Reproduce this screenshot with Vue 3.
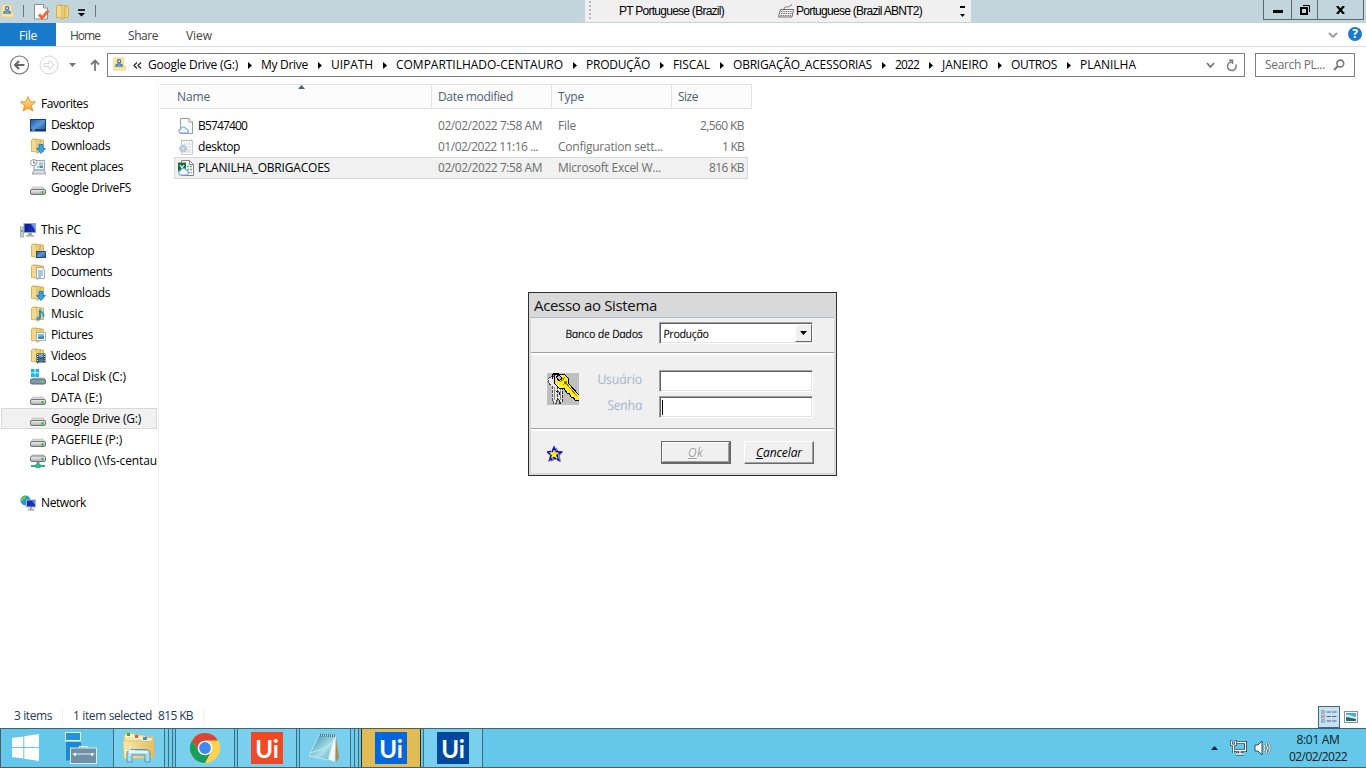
<script setup>
import { ref } from 'vue'

// Tightens or loosens tracking so a label fills the given width in pixels.
const vFit = {
  mounted(el, { value }) {
    const n = el.textContent.trim().length
    const natural = el.getBoundingClientRect().width
    if (n && natural) el.style.letterSpacing = ((value - natural) / n).toFixed(3) + 'px'
  }
}

const tabs = [['Home', 30], ['Share', 30], ['View', 26]]
const crumbs = [
  ['Google Drive (G:)', 90], ['My Drive', 47], ['UIPATH', 42], ['COMPARTILHADO-CENTAURO', 167],
  ['PRODUÇÃO', 64], ['FISCAL', 37], ['OBRIGAÇÃO_ACESSORIAS', 139], ['2022', 24],
  ['JANEIRO', 46], ['OUTROS', 46], ['PLANILHA', 56]
]
const groups = ref([
  { name: 'Favorites', icon: 'star', w: 47, items: [
    ['Desktop', 'screen', 43], ['Downloads', 'f-down', 59], ['Recent places', 'recent', 72], ['Google DriveFS', 'drive', 80]] },
  { name: 'This PC', icon: 'pc', w: 40, items: [
    ['Desktop', 'f-desk', 43], ['Documents', 'f-doc', 61], ['Downloads', 'f-down', 59], ['Music', 'f-music', 32],
    ['Pictures', 'f-pic', 42], ['Videos', 'f-vid', 35], ['Local Disk (C:)', 'windrive', 75], ['DATA (E:)', 'drive', 51],
    ['Google Drive (G:)', 'drive', 90], ['PAGEFILE (P:)', 'drive', 71], ['Publico (\\\\fs-centau', 'netdrive', 106]] },
  { name: 'Network', icon: 'network', w: 45, items: [] }
])
const files = [
  { name: 'B5747400', nw: 49, icon: 'cloudfile', date: '02/02/2022 7:58 AM', dw: 104, type: 'File', tw: 18, size: '2,560 KB', sw: 44 },
  { name: 'desktop', nw: 42, icon: 'config', date: '01/02/2022 11:16 ...', dw: 100, type: 'Configuration sett...', tw: 105, size: '1 KB', sw: 22 },
  { name: 'PLANILHA_OBRIGACOES', nw: 132, icon: 'excel', date: '02/02/2022 7:58 AM', dw: 104, type: 'Microsoft Excel W...', tw: 103, size: '816 KB', sw: 35, sel: true }
]
</script>

<template>
  <div class="screen">
    <svg class="defs" width="0" height="0">
      <defs>
        <linearGradient id="gf" x1="0" x2="1"><stop offset="0" stop-color="#f8e8ac" /><stop offset="1" stop-color="#e3bf60" /></linearGradient>
        <linearGradient id="gs" x1="0" y1="0" x2="1" y2="1"><stop offset="0" stop-color="#1d55a5" /><stop offset=".5" stop-color="#5a9ad8" /><stop offset="1" stop-color="#174a98" /></linearGradient>
        <linearGradient id="gd" x1="0" y1="0" x2="0" y2="1"><stop offset="0" stop-color="#f4f4f4" /><stop offset="1" stop-color="#a9a9ad" /></linearGradient>
        <linearGradient id="gst" x1="0" y1="0" x2="0" y2="1"><stop offset="0" stop-color="#fff0a0" /><stop offset="1" stop-color="#f79a26" /></linearGradient>
        <linearGradient id="gn" x1="0" y1="0" x2="1" y2="1"><stop offset="0" stop-color="#2b8fa6" /><stop offset=".6" stop-color="#a9dfe8" /><stop offset="1" stop-color="#4fa9bb" /></linearGradient>
      </defs>
      <symbol id="folder" viewBox="0 0 16 16">
        <path d="M1.5 2.5 L2.5 1 H7 L8 2.5 V14 L1.5 13.5Z" fill="#f0d98f" stroke="#cba447" stroke-width=".8" />
        <path d="M5 1.5 H10.5 V13.5 L7 15.5 V4Z" fill="url(#gf)" stroke="#d0a94e" stroke-width=".8" />
        <path d="M10.5 2 H13.5 V13.5 H9Z" fill="#edcf7c" stroke="#cfa74b" stroke-width=".8" />
      </symbol>
      <symbol id="userfile" viewBox="0 0 16 16">
        <path d="M1 .5 H13 V9 L15.5 11.5 V15.5 H1Z" fill="#fbe79c" stroke="#f0d273" />
        <circle cx="7.5" cy="4.5" r="2" fill="#dcebf0" stroke="#4379b5" stroke-width="1.5" />
        <path d="M3.5 10.5 C3.5 7 11.5 7 11.5 10.5Z" fill="#b8d2e8" stroke="#4379b5" stroke-width="1.5" />
      </symbol>
      <symbol id="star" viewBox="0 0 16 16">
        <path d="M8 .6 L10.1 5.6 L15.6 6 L11.4 9.5 L12.8 15 L8 12 L3.2 15 L4.6 9.5 L.4 6 L5.9 5.6Z" fill="url(#gst)" stroke="#e98d28" stroke-width=".9" />
      </symbol>
      <symbol id="screen" viewBox="0 0 16 16">
        <rect x=".5" y="2.5" width="15" height="11.5" fill="url(#gs)" stroke="#183f7d" /><path d="M1 13 H15" stroke="#132d5c" stroke-width="1.5" /><path d="M2 13 H5" stroke="#9cc" />
      </symbol>
      <symbol id="f-down" viewBox="0 0 16 16">
        <use href="#folder" /><path d="M9 6.5 H13 V10.5 H15.5 L11 15.5 L6.5 10.5 H9Z" fill="#36a3e8" stroke="#1773b6" stroke-width=".8" />
      </symbol>
      <symbol id="recent" viewBox="0 0 16 16">
        <path d="M5.5 1.5 H14.5 V11 H4V5" fill="#f2f7fa" stroke="#91a0aa" /><path d="M9 4 H13 M9 6 H13 M7 8 H10" stroke="#6e91a8" /><rect x="10" y="7" width="3" height="2" fill="#3a95d2" />
        <path d="M4 11 H14 L16 15 H2Z" fill="#d7dcdf" stroke="#8b959c" stroke-width=".8" />
        <circle cx="3.7" cy="3.7" r="3.2" fill="#fafafa" stroke="#919ba1" /><path d="M3.7 1.5 V4 H5.5" stroke="#555" stroke-width=".8" fill="none" />
      </symbol>
      <symbol id="drive" viewBox="0 -1 16 16">
        <path d="M3 6 H13 L15.5 9 H.5Z" fill="#d9d9dc" stroke="#b4b4b8" stroke-width=".6" /><rect x=".5" y="8.5" width="15" height="5" rx="1.5" fill="url(#gd)" stroke="#77777b" /><rect x="11.5" y="10" width="2" height="2.5" fill="#26bd2e" />
      </symbol>
      <symbol id="windrive" viewBox="0 0 16 16">
        <path d="M1 0 H4.5 V3.5 H1Z M5.5 0 H9 V3.5 H5.5Z M1 4.5 H4.5 V8 H1Z M5.5 4.5 H9 V8 H5.5Z" fill="#16b6ee" />
        <path d="M4 8 H13 L15.5 10.5 H.5Z" fill="#d1dce2" /><rect x=".5" y="10" width="15" height="5" rx="1.5" fill="#7f99a6" stroke="#55666f" /><rect x="11.5" y="11.5" width="2" height="2.2" fill="#54e35a" />
        <path d="M1 4.5 H4.5 V8 H1Z M5.5 4.5 H9 V8 H5.5Z" fill="#16b6ee" />
      </symbol>
      <symbol id="netdrive" viewBox="0 0 16 16">
        <path d="M3 1 H13 L15.5 3.5 H.5Z" fill="#ddd" /><rect x=".5" y="3" width="15" height="5.5" rx="1.5" fill="url(#gd)" stroke="#77777b" /><rect x="11.5" y="4.7" width="2" height="2.4" fill="#26bd2e" />
        <path d="M8 9 V12" stroke="#7d8b87" stroke-width="3" /><path d="M1 13 H15" stroke="#37a987" stroke-width="2" /><rect x="5.5" y="11" width="5" height="4" fill="#2db885" />
      </symbol>
      <symbol id="pc" viewBox="0 0 16 16">
        <rect x=".5" y="5" width="3" height="10" fill="#c9cfd1" stroke="#929a9c" stroke-width=".7" /><rect x="1" y="8" width="1.5" height="2" fill="#31c135" />
        <rect x="4" y="1.5" width="11.5" height="9" fill="#132db9" stroke="#9ca8b4" /><path d="M5 2 H10 L7 10 H5Z" fill="#1420a0" /><path d="M11 2 H15 V8Z" fill="#7793ee" />
        <path d="M8 11 H12 V13 H14 V14.5 H6 V13 H8Z" fill="#a0a9b2" />
      </symbol>
      <symbol id="f-desk" viewBox="0 0 16 16"><use href="#folder" /><rect x="6.5" y="8.5" width="9" height="6" fill="url(#gs)" stroke="#2e506e" /></symbol>
      <symbol id="f-doc" viewBox="0 0 16 16"><use href="#folder" /><path d="M6.5 3.5 H12 L14.5 6 V14.5 H6.5Z" fill="#fcfdfd" stroke="#a0acb2" /><path d="M8 7 H13 M8 9 H13 M8 11 H13 M8 13 H11" stroke="#5b8fb8" /></symbol>
      <symbol id="f-music" viewBox="0 0 16 16"><use href="#folder" /><path d="M10 4 V12" stroke="#1679bc" stroke-width="1.6" /><ellipse cx="8.5" cy="12.5" rx="2.2" ry="1.7" fill="#269be0" /><path d="M10 4 C11 7 15.5 7 13 11" stroke="#2095df" stroke-width="1.6" fill="none" /></symbol>
      <symbol id="f-pic" viewBox="0 0 16 16"><use href="#folder" /><rect x="6.5" y="5.5" width="9" height="8" fill="#fff" stroke="#a4b2b8" /><rect x="8" y="7" width="6" height="5" fill="#76bde0" /><path d="M8 12 V10 L14 9 V12Z" fill="#47899e" /></symbol>
      <symbol id="f-vid" viewBox="0 0 16 16"><use href="#folder" /><rect x="6.5" y="5.5" width="9" height="9" fill="#2c3437" /><rect x="8.5" y="6" width="5" height="3.5" fill="#6ea8cd" /><rect x="8.5" y="10.5" width="5" height="3.5" fill="#427e9f" /><path d="M7.5 6 V14 M14.7 6 V14" stroke="#e2e2e2" stroke-dasharray="1 1" /></symbol>
      <symbol id="network" viewBox="0 0 16 16">
        <circle cx="5.5" cy="5.5" r="5" fill="#2494db" /><path d="M2 2 C5 0 7 1 6 3 C5 5 3 4 2 7 C0 5 1 3 2 2 M7 5 L10 4 V8 H7Z" fill="#63c846" />
        <rect x="6.5" y="5" width="9" height="7" fill="#1631bd" stroke="#a8b6c1" /><path d="M12 5.5 H15 V10Z" fill="#6c8ceb" /><path d="M10 12 H12 V14 H14 V15.4 H8 V14 H10Z" fill="#9ba4ac" />
      </symbol>
      <symbol id="cloud" viewBox="0 0 16 16"><path d="M3 15 C0 15 0 11.5 2.6 11.3 C3 8.5 7 8.3 7.7 10.8 C11 10.8 11 15 8.5 15Z" fill="#f6faff" stroke="#76a4ed" stroke-width="1.1" /></symbol>
      <symbol id="cloudfile" viewBox="0 0 16 16"><path d="M2.5 .5 H11 L14.5 4 V15.5 H2.5Z" fill="#f8f8f8" stroke="#9b9b9b" /><path d="M11 .5 V4 H14.5" fill="#fff" stroke="#9b9b9b" /><use href="#cloud" /></symbol>
      <symbol id="config" viewBox="0 0 16 16"><path d="M3.5 1.5 H14.5 V15.5 H3.5Z" fill="#fafafa" stroke="#c6cccf" /><path d="M3 1.5 H15" stroke="#bbb" stroke-dasharray="1 1.5" stroke-width="2" /><path d="M6 5 H13 M9 8 H13 M9 11 H13 M6 13 H13" stroke="#cdd5d9" /><circle cx="5" cy="9.5" r="3" fill="#e6eef2" stroke="#a8bac7" stroke-width="2" stroke-dasharray="1.4 .6" /><circle cx="5" cy="9.5" r="1.4" fill="#fff" stroke="#a8bac7" /></symbol>
      <symbol id="excel" viewBox="0 0 16 16"><path d="M3.5 .5 H11.5 L15.5 4.5 V15.5 H3.5Z" fill="#fff" stroke="#858585" /><path d="M11.5 .5 V4.5 H15.5" fill="none" stroke="#858585" /><path d="M9 6.5 H14 M9 9.5 H14 M10 12.5 H14" stroke="#6fa283" stroke-dasharray="2 1" stroke-width="1.4" /><rect x="0" y="2.5" width="8" height="9" fill="#187142" /><path d="M2 5 L4 7.5 L6 5" fill="none" stroke="#fff" stroke-width="1.2" /><path d="M3 15 C0 15 0 11 2.6 10.8 C3 7.6 7 7.4 7.7 10 C11 10 11 15 8.5 15Z" fill="#f6faff" stroke="#76a4ed" stroke-width="1.1" /></symbol>
    </svg>

    <header class="title">
      <svg class="ti" width="13" height="15"><use href="#userfile" width="13" height="14" y="0" /></svg>
      <i class="vbar b1"></i>
      <svg class="props" width="16" height="17" viewBox="0 0 16 17"><path d="M.5 1.5 H9.5 L13.5 5 V16 H.5Z" fill="#fbfbfb" stroke="#8a8f91" /><path d="M9.5 1.5 V5 H13.5" fill="#e0e0e0" stroke="#8a8f91" /><path d="M5 11.5 L8 15 L14.5 7.5" fill="none" stroke="#e9683c" stroke-width="2.8" /></svg>
      <svg class="fo" width="16" height="16"><use href="#folder" /></svg>
      <svg class="qa" width="7" height="8" viewBox="0 0 7 8"><path d="M0 1 H7" stroke="#000" stroke-width="1.6" /><path d="M0 4 H7 L3.5 7.5Z" fill="#000" /></svg>
      <i class="vbar b2"></i>
      <div class="lang">
        <i class="grip"></i>
        <span class="l1"><span v-fit="105" class="t">PT Portuguese (Brazil)</span></span>
        <svg class="kbd" width="16" height="14" viewBox="0 0 16 14"><path d="M6 5 C7 1 9 4 11 2.5 L14 .8" fill="none" stroke="#777" /><path d="M2.5 5.500 H15.500 L14 13 H.5Z" fill="#f4f4f4" stroke="#6d6d6d" /><path d="M3 7.500 H14 M3 9.500 H14 M2.500 11.500 H13" stroke="#777" stroke-dasharray="1.5 .8" /></svg>
        <span class="l2"><span v-fit="126" class="t">Portuguese (Brazil ABNT2)</span></span>
        <svg class="lm" width="6" height="12" viewBox="0 0 6 12"><path d="M0 1 H5" stroke="#000" stroke-width="2" /><path d="M0 8 H5 L2.5 11Z" fill="#000" /></svg>
      </div>
      <div class="winbtns">
        <span class="w1"><svg width="10" height="3"><rect width="10" height="3" /></svg></span>
        <span class="w2"><svg width="10" height="10" viewBox="0 0 10 10"><path d="M1 3 H7 V9 H1Z" fill="none" stroke="#000" stroke-width="2" /><path d="M3 .5 H9.5 V7" fill="none" stroke="#000" /></svg></span>
        <span class="w3"><svg width="9" height="8" viewBox="0 0 9 8"><path d="M1 0 L8 8 M8 0 L1 8" stroke="#000" stroke-width="2.2" /></svg></span>
      </div>
    </header>

    <nav class="ribbon">
      <span class="file"><span v-fit="18" class="t">File</span></span>
      <span v-for="t in tabs" :key="t[0]" class="tab"><span v-fit="t[1]" class="t">{{ t[0] }}</span></span>
      <svg class="rchev" width="10" height="7" viewBox="0 0 10 7"><path d="M1 1 L5 5 L9 1" fill="none" stroke="#9a9a9a" stroke-width="1.8" /></svg>
      <span class="help">?</span>
    </nav>

    <div class="addr">
      <svg class="back" width="20" height="20" viewBox="0 0 20 20"><circle cx="9.500" cy="10" r="9" fill="#fff" stroke="#717171" stroke-width="1.1" /><path d="M5 10 H14.500 M9 6 L5 10 L9 14" fill="none" stroke="#666" stroke-width="2" /></svg>
      <svg class="fwd" width="20" height="20" viewBox="0 0 20 20"><circle cx="10" cy="10" r="9" fill="#fff" stroke="#d5d5d5" /><path d="M5 8.5 H10 V5.5 L15 10 L10 14.5 V11.5 H5Z" fill="none" stroke="#d5d5d5" /></svg>
      <svg class="hist" width="7" height="4"><path d="M0 0 H7 L3.5 4Z" fill="#777" /></svg>
      <svg class="up" width="10" height="12" viewBox="0 0 10 12"><path d="M5 12 V1.5 M1 5.5 L5 1.5 L9 5.5" fill="none" stroke="#777" stroke-width="1.8" /></svg>
      <div class="box">
        <svg class="bi" width="13" height="14"><use href="#userfile" width="13" height="14" /></svg>
        <svg class="ch2" width="9" height="7" viewBox="0 0 9 7"><path d="M4 .5 L1 3.5 L4 6.5 M8 .5 L5 3.5 L8 6.5" fill="none" stroke="#222" stroke-width="1.2" /></svg>
        <template v-for="(c, i) in crumbs" :key="c[0]">
          <svg v-if="i" class="sep" width="23" height="9" viewBox="0 0 23 9"><path d="M10 1 L14 4.5 L10 8Z" fill="#000" /></svg>
          <span v-fit="c[1]" class="t">{{ c[0] }}</span>
        </template>
        <svg class="bchev" width="9" height="7" viewBox="0 0 9 7"><path d="M1 1 L4.5 5 L8 1" fill="none" stroke="#707070" stroke-width="1.7" /></svg>
        <svg class="refresh" width="12" height="13" viewBox="0 0 12 13"><path d="M9.8 5.500 A4.300 4.300 0 1 1 6.500 3" fill="none" stroke="#7a7a7a" stroke-width="1.500" /><path d="M3 1.200 H6.500 V5" fill="none" stroke="#7a7a7a" stroke-width="1.500" /></svg>
      </div>
      <div class="search"><span v-fit="60" class="t">Search PL...</span>
        <svg width="12" height="12" viewBox="0 0 12 12"><circle cx="7.3" cy="4.5" r="3.4" fill="none" stroke="#777" stroke-width="1.6" /><path d="M5 7 L1 11" stroke="#777" stroke-width="2" /></svg>
      </div>
    </div>

    <main class="content">
      <aside class="side">
        <section v-for="g in groups" :key="g.name" class="grp">
          <div class="row head"><svg width="16" height="16"><use :href="'#' + g.icon" /></svg><span v-fit="g.w" class="t">{{ g.name }}</span></div>
          <div v-for="it in g.items" :key="it[0]" class="row item" :class="{ on: it[0] === 'Google Drive (G:)' }">
            <svg width="16" height="16"><use :href="'#' + it[1]" /></svg><span v-fit="it[2]" class="t">{{ it[0] }}</span>
          </div>
        </section>
      </aside>
      <section class="list">
        <div class="cols">
          <span class="c1"><span v-fit="33" class="t">Name</span><svg class="sort" width="7" height="4"><path d="M0 4 H7 L3.5 0Z" fill="#4c607a" /></svg></span>
          <span class="c2"><span v-fit="75" class="t">Date modified</span></span>
          <span class="c3"><span v-fit="26" class="t">Type</span></span>
          <span class="c4"><span v-fit="20" class="t">Size</span></span>
        </div>
        <div v-for="f in files" :key="f.name" class="frow" :class="{ sel: f.sel }">
          <span class="fn"><svg width="16" height="16"><use :href="'#' + f.icon" /></svg><span v-fit="f.nw" class="t">{{ f.name }}</span></span>
          <span class="fd"><span v-fit="f.dw" class="t">{{ f.date }}</span></span>
          <span class="ft"><span v-fit="f.tw" class="t">{{ f.type }}</span></span>
          <span class="fs"><span v-fit="f.sw" class="t">{{ f.size }}</span></span>
        </div>
      </section>
    </main>

    <footer class="status">
      <span class="s1"><span v-fit="38" class="t">3 items</span></span>
      <span class="s2"><span v-fit="79" class="t">1 item selected</span></span>
      <span class="s3"><span v-fit="35" class="t">815 KB</span></span>
      <span class="vd"><svg width="16" height="14" viewBox="0 0 16 14"><path d="M.5 .5 H3.5 V3.5 H.5Z M.5 5 H3.5 V8 H.5Z M.5 9.5 H3.5 V12.5 H.5Z" fill="#fff" stroke="#8b9ba8" stroke-width=".8" /><path d="M1.3 2 H2.7" stroke="#3a4" stroke-width="1.4" /><path d="M1.3 6.5 H2.7" stroke="#d33" stroke-width="1.4" /><path d="M1.3 11 H2.7" stroke="#29c" stroke-width="1.4" /><path d="M5.5 2 H15.5 M5.5 6.5 H15.5 M5.5 11 H15.5" stroke="#53657a" stroke-dasharray="4.5 1" /></svg></span>
      <svg class="vt" width="14" height="12" viewBox="0 0 14 12"><rect x=".5" y=".5" width="13" height="11" fill="#fff" stroke="#87939c" /><rect x="2" y="2" width="10" height="8" fill="#4aa5e2" /><path d="M2 4 C5 3 8 6 12 6 V8 H2Z" fill="#d9f2f3" /><path d="M2 6 C5 6 8 7 12 8 V10 H2Z" fill="#226d70" /></svg>
    </footer>

    <div class="task">
      <span class="start"><svg width="28" height="27" viewBox="0 0 28 27"><path d="M0 4 L11.3 2.4 V13 H0Z M12.3 2.2 L27 0 V13 H12.3Z M0 14 H11.3 V24.5 L0 23Z M12.3 14 H27 V27 L12.3 24.7Z" fill="#fff" /></svg></span>
      <span class="srv"><svg width="32" height="32" viewBox="0 0 32 32"><rect x=".5" y=".5" width="15" height="8" fill="#2591dc" stroke="#dff3fb" /><rect x="1" y="9.5" width="15" height="19" fill="#1f88d4" /><path d="M0 9 H16" stroke="#e8f7fc" /><path d="M14.5 16 V14.5 H22 V16" fill="none" stroke="#e5f4fa" stroke-width="1.2" /><rect x="5.5" y="16" width="26" height="15.5" fill="#7190a6" stroke="#dcebf2" /><path d="M7.500 22 H29.500" stroke="#e7f3f8" /><rect x="9" y="21" width="2" height="3" fill="#e7f3f8" /><rect x="26" y="21" width="2" height="3" fill="#e7f3f8" /></svg></span>
      <span class="btn exp"><svg width="34" height="32" viewBox="0 0 34 32"><path d="M2 4 L4 1 H11 L13 3 H22 L24 5 H31 V25 H2Z" fill="#f7e5a0" stroke="#d9b85c" /><path d="M4 4 H12 M12 6 H20 M20 8 H29" stroke="#fffbe6" stroke-width="2" /><path d="M5 2.500 H8" stroke="#25b648" stroke-width="3" /><path d="M13 4.500 H16" stroke="#e2553d" stroke-width="3" /><path d="M21 6.500 H25" stroke="#3d93dd" stroke-width="3" /><path d="M1 9 L32 9 L32 26 L2 27Z" fill="url(#gf)" stroke="#dcb961" stroke-width=".7" /><path d="M5 30 V22 Q5 17.500 10 17.500 H23 Q28 17.500 28 22 V30 H23 V23 H10 V30Z" fill="#a8daed" stroke="#5096b9" /><path d="M7 20 H26" stroke="#e6f8ff" stroke-width="2" /><path d="M8 13 V24 M3 18.500 H13" stroke="#fff" opacity=".7" /></svg></span>
      <i class="stack"></i><i class="stack"></i>
      <span class="btn chrome"><svg width="30" height="30" viewBox="0 0 30 30"><circle cx="15" cy="15" r="15" fill="#fdd24d" /><path d="M2 7.500 A15 15 0 0 1 28 7.500 H15 L9 18.600Z" fill="#db4437" /><path d="M2 7.500 L9 18.500 L15 22 L15 30 A15 15 0 0 1 2 7.500Z" fill="#169e5a" /><path d="M21.500 18.500 L15 30 L8 19Z" fill="#169e5a" /><path d="M15 8 H28.300 A15 15 0 0 1 15 30 L21.500 18.500Z" fill="#fdd24d" /><circle cx="15" cy="15" r="7.300" fill="#fff" /><circle cx="15" cy="15" r="5.900" fill="#4285f4" /></svg></span>
      <span class="btn u1"><b class="ui">Ui</b></span>
      <span class="btn note"><svg width="32" height="30" viewBox="0 0 32 30"><path d="M27 3 L30 25 L27 29 L24 7Z" fill="#a68e58" /><path d="M10 2 L27 3 L26 29 L20 27Z" fill="#f5f8f8" stroke="#adc0c5" stroke-width=".6" /><path d="M10 2 L26 3 L19 27 L0 23Z" fill="url(#gn)" stroke="#d7eff4" stroke-width=".7" /><path d="M2 20 C10 16 15 17 23 10" stroke="#d9f5f7" opacity=".7" fill="none" /><path d="M11 2 L27 3" stroke="#657174" stroke-width="3" stroke-dasharray="1 1" /></svg></span>
      <i class="stack"></i><i class="stack"></i>
      <span class="btn u2"><b class="ui">Ui</b></span>
      <span class="btn u3"><b class="ui">Ui</b></span>
      <div class="tray">
        <svg class="tup" width="7" height="4"><path d="M0 4 H7 L3.5 0Z" fill="#14262d" /></svg>
        <svg class="tn" width="17" height="16" viewBox="0 0 17 16"><path d="M6.500 2.500 H15.500 V10.500 H4.500 V9" fill="none" stroke="#253b45" stroke-width="3" /><path d="M10 11 V14 M6 14 H14" stroke="#253b45" stroke-width="3" /><path d="M6.500 2.500 H15.500 V10.500 H4.500 V9 M10 11 V14 M6 14 H14" fill="none" stroke="#fff" stroke-width="1.300" /><path d="M1.500 1 H5.500 V5 H1.500Z M3.500 5 V13" fill="#65c7e9" stroke="#253b45" stroke-width="2.200" /><path d="M1.500 1 H5.500 V5 H1.500Z M3.500 5 V13" fill="none" stroke="#fff" /></svg>
        <svg class="tv" width="17" height="16" viewBox="0 0 17 16"><path d="M1 5 H4 L8 1 V15 L4 11 H1Z" fill="#fff" stroke="#344d59" /><path d="M10 5 Q12 8 10 11 M12 3 Q15 8 12 13 M14 1.500 Q18 8 14 14.500" fill="none" stroke="#415c68" stroke-width="1.800" /><path d="M10 5 Q12 8 10 11 M12 3 Q15 8 12 13 M14 1.500 Q18 8 14 14.500" fill="none" stroke="#fff" /></svg>
        <div class="clock"><span v-fit="43" class="t">8:01 AM</span><span v-fit="58" class="t">02/02/2022</span></div>
      </div>
    </div>

    <div class="dialog">
      <div class="dt"><span v-fit="123" class="t">Acesso ao Sistema</span></div>
      <div class="db">
        <div class="d1">
          <span class="lab"><span v-fit="81" class="t">Banco de Dados</span></span>
          <div class="combo"><span v-fit="48" class="t">Produção</span><span class="arr"><svg width="7" height="4"><path d="M0 0 H7 L3.5 4Z" /></svg></span></div>
        </div>
        <div class="d2">
          <svg class="keys" width="32" height="32" viewBox="0 0 32 32" shape-rendering="crispEdges"><rect width="32" height="32" fill="#c0c0c0" />
            <path d="M5 3 H9 L12 6 V12 L10 14 V27 H9 V30 H6 V27 H5 V13 L1 10 V6Z" fill="#e8e8e8" stroke="#505050" stroke-dasharray="3 1" /><path d="M11 14 H15 V29 L12 31 V26 H10 V22 H12 V18 H10Z" fill="#e8e8e8" stroke="#303030" stroke-dasharray="3 1" /><path d="M7 14 V27 M13 16 V27" stroke="#8a8a8a" />
            <path d="M5 6 V2 L8 0 H12" fill="none" stroke="#000" />
            <path d="M8 1 H17 L21 5 V10 L32 22 V27 H28 L26 24 H24 L22 20 H20 L17 15 H12 L7 10 V5Z" fill="#ffee16" stroke="#000" /><path d="M17 8 L30 23" stroke="#877900" /><path d="M9 4 L12 2 L15 5 L12 8Z" fill="#c0c0c0" stroke="#000" /><path d="M9 11 L13 14 H16" fill="none" stroke="#fff38f" /><path d="M13 9 L18 4 M16 12 L20 8" stroke="#867600" stroke-dasharray="1 1" stroke-width="2" />
          </svg>
          <span class="lab big a"><span v-fit="48" class="t">Usuário</span></span><div class="inp"></div>
          <span class="lab big b"><span v-fit="38" class="t">Senha</span></span><div class="inp second"><i class="caret"></i></div>
        </div>
        <div class="d3">
          <svg class="dstar" width="17" height="16" viewBox="0 0 17 16"><path d="M10 2 L12 6 H16 L13 9.500 L14 15 L10 12 L5 15" fill="none" stroke="#808080" stroke-width="1.500" /><path d="M8 1 L9.800 5.500 L15 6 L11 9.200 L12.500 14.200 L8 11.500 L3.500 14.200 L5 9.200 L1 6 L6.200 5.500Z" fill="#fff200" stroke="#0000e8" stroke-width="1.500" stroke-dasharray="4 .6" /></svg>
          <span class="ok"><span v-fit="15" class="t"><u>O</u>k</span></span>
          <span class="cancel"><span v-fit="46" class="t"><u>C</u>ancelar</span></span>
        </div>
      </div>
    </div>
  </div>
</template>

<style>
html, body { margin: 0; overflow: hidden; }
</style>

<style scoped>
.screen { position: relative; width: 1366px; height: 768px; display: flex; flex-direction: column; background: #fff; color: #000; font: 12px/21px "Open Sans", "Noto Sans", sans-serif; overflow: hidden; box-sizing: border-box; }
.screen * { box-sizing: border-box; }
.defs { position: absolute; }
svg { display: block; flex: none; }
.t { display: inline-block; white-space: pre; flex: none; }
.title { height: 23px; flex: none; background: #c3d5dc; display: flex; align-items: flex-start; }
.ti { margin: 4px 0 0 1px; }
.vbar { width: 1px; height: 12px; background: #68777d; margin-top: 5px; }
.b1 { margin-left: 9px; }
.props { margin: 3px 0 0 10px; }
.fo { margin: 4px 0 0 5px; }
.qa { margin: 9px 0 0 7px; }
.b2 { margin-left: 10px; }
.lang { margin-left: 489px; width: 386px; height: 22px; background: #f0f0f0; display: flex; align-items: center; font: 12px/20px "Liberation Sans", Arial, sans-serif; }
.grip { width: 2px; height: 20px; margin-left: 4px; background: repeating-linear-gradient(#bbb 0 2px, transparent 2px 4px); }
.l1 { margin-left: 28px; width: 159px; }
.kbd { margin-right: 2px; }
.l2 { width: 160px; }
.lm { margin-left: 4px; margin-top: 2px; }
.winbtns { margin-left: auto; margin-right: 2px; display: flex; height: 20px; border: 1px solid #5d686d; border-top: 0; }
.winbtns span { display: flex; align-items: center; justify-content: center; border-left: 1px solid #5d686d; height: 19px; }
.winbtns .w1 { width: 27px; border: 0; padding-top: 4px; }
.w2 { width: 26px; }
.w3 { width: 46px; }
.ribbon { height: 24px; flex: none; display: flex; line-height: 26px; border-bottom: 1px solid #dadbdc; color: #444; }
.file { width: 56px; padding-left: 19px; background: #1979ca; color: #fff; height: 23px; line-height: 25px; margin-right: 14px; }
.tab { margin-right: 28px; }
.rchev { margin: 9px 10px 0 auto; }
.help { width: 14px; height: 14px; border-radius: 50%; background: #1979ca; color: #fff; font: bold 12px/14px "Open Sans", sans-serif; text-align: center; margin: 4px 4px 0 0; }
.addr { height: 37px; flex: none; display: flex; align-items: center; padding-bottom: 1px; }
.addr .t { margin-top: -2px; }
.back { margin-left: 10px; }
.fwd { margin-left: 9px; }
.hist { margin-left: 10px; }
.up { margin-left: 14px; }
.box { margin-left: 7px; width: 1138px; height: 24px; border: 1px solid #7e7e7e; display: flex; align-items: center; }
.bi { margin: 0 7px 2px 5px; }
.ch2 { margin-right: 6px; }
.bchev { margin-left: auto; margin-right: 11px; }
.refresh { margin-right: 6px; }
.search { margin-left: 10px; width: 100px; height: 24px; border: 1px solid #7e7e7e; display: flex; align-items: center; padding-left: 9px; color: #6d6d6d; }
.search svg { margin-left: 8px; }
.content { flex: 1; display: flex; min-height: 0; }
.side { width: 159px; border-right: 1px solid #f0f0f0; padding-top: 9px; overflow: hidden; }
.grp { margin-bottom: 21px; }
.row { height: 21px; display: flex; align-items: center; }
.row svg { margin-right: 5px; }
.head { padding-left: 20px; }
.item { padding-left: 30px; }
.on { background: #f1f1f1; border: 1px solid #d9d9d9; margin: 0 1px; padding-left: 28px; }
.list { flex: 1; }
.cols { margin-left: 1px; width: 592px; height: 25px; border: 1px solid #e2e2e2; border-left: 0; background: #fcfcfc; display: flex; line-height: 23px; color: #4c607a; margin-bottom: 6px; }
.cols > span { position: relative; border-right: 1px solid #e2e2e2; padding-left: 6px; }
.cols .c1 { width: 272px; padding-left: 17px; }
.c2, .c3 { width: 120px; }
.cols .c4 { width: 79px; border: 0; }
.sort { position: absolute; left: 138px; top: 0; }
.frow { margin-left: 15px; width: 574px; height: 21px; display: flex; border: 1px solid transparent; line-height: 20px; color: #6d6d6d; }
.frow.sel { height: 22px; background: #f1f1f1; border-color: #d9d9d9; }
.fn { width: 263px; display: flex; align-items: center; padding-left: 3px; color: #000; }
.fn svg { margin-right: 4px; }
.fd { width: 120px; }
.ft { width: 122px; }
.fs { width: 64px; text-align: right; }
.status { height: 22px; flex: none; display: flex; align-items: center; color: #1e395b; }
.s1, .s2, .s3 { height: 16px; line-height: 14px; }
.s1 { width: 63px; padding-left: 14px; }
.s2 { width: 95px; padding-left: 10px; }
.s1, .s3 { border-right: 1px solid #f0f0f0; }
.s3 { width: 46px; }
.vd { margin-left: auto; width: 22px; height: 22px; border: 1px solid #42677f; background: #c8e0f4; display: flex; align-items: center; justify-content: center; }
.vt { margin: 0 8px 0 4px; }
.task { height: 40px; flex: none; background: #65c7e9; border: 1px solid #4b5f67; border-right: 0; display: flex; }
.start { margin: 5px 0 0 11px; width: 53px; }
.srv { margin-top: 3px; width: 48px; }
.btn { height: 38px; display: flex; align-items: center; justify-content: center; background: #79d0ee; border: solid #3b7083; border-width: 0 1px; margin-right: 2px; width: 60px; }
.exp { width: 52px; margin: 0; }
.note { width: 52px; margin: 0; }
.stack { width: 4px; border-right: 1px solid #3b7083; background: #70cbea; }
.chrome { margin-left: 2px; }
.u2 { margin-left: 2px; background: #e1bb53; border-color: #332b18; }
.ui { width: 32px; height: 32px; background: #f04923; color: #fff; font: bold 24px/33px Lato, sans-serif; text-align: center; }
.u2 .ui { background: #0067df; }
.u3 .ui { background: #00489d; }
.tray { margin-left: auto; display: flex; align-items: center; }
.tup { margin-right: 12px; }
.tn { margin-right: 7px; }
.tv { margin-right: 17px; }
.clock { width: 60px; margin-right: 18px; display: flex; flex-direction: column; align-items: center; line-height: 17px; height: 38px; padding-top: 2px; color: #0a1d25; }

.dialog { position: absolute; left: 528px; top: 292px; width: 309px; height: 184px; background: #d9d9d9; border: 1px solid #2c2f33; padding: 0 2px 2px; }
.dt { height: 25px; font-size: 15px; line-height: 24px; padding-left: 3px; border-bottom: 1px solid #a9b9c9; color: #111; }
.db { height: 155px; background: #f0f0f0; font-family: "Open Sans", sans-serif; font-style: italic; font-size: 11.5px; }
.d1 { height: 37px; display: flex; padding-top: 4px; border-bottom: 2px solid #fff; box-shadow: inset 0 -1px #a0a0a0; }
.lab { width: 111px; text-align: right; line-height: 24px; }
.lab .t, .combo .t { transform: skewX(9deg); }
.combo, .inp { margin-left: 17px; width: 154px; height: 22px; background: #fff; border: 1px solid; border-color: #a0a0a0 #fff #fff #a0a0a0; box-shadow: inset 1px 1px #606060, inset -1px -1px #e3e3e3; }
.combo { display: flex; padding: 1px 0 1px 3px; line-height: 19px; }
.arr { margin-left: auto; width: 17px; background: #f0f0f0; border: 1px solid; border-color: #fff #696969 #696969 #fff; display: flex; align-items: center; justify-content: center; }
.d2 { height: 76px; position: relative; display: grid; grid-template-columns: 111px 171px; grid-template-rows: 26px 26px; padding-top: 15px; border-bottom: 2px solid #fff; box-shadow: inset 0 -1px #a0a0a0; }
.keys { position: absolute; left: 16px; top: 18px; }
.big { color: #a3b9d4; font-size: 13.5px; line-height: 19px; }
.caret { display: block; width: 1px; height: 15px; background: #000; margin: 3px 0 0 2px; }
.d3 { height: 42px; display: flex; padding-top: 10px; line-height: 21px; font-size: 12px; }
.dstar { margin: 5px 98px 0 15px; }
.ok { width: 70px; height: 23px; border: 2px solid #696969; border-top-width: 1px; border-left-width: 1px; box-shadow: inset 1px 1px #fff, inset -1px -1px #a0a0a0; text-align: center; color: #a0a0a0; text-shadow: 1px 1px #fff; }
.cancel { margin-left: 13px; width: 70px; height: 23px; border: 1px solid; border-color: #fff #696969 #696969 #fff; box-shadow: inset -1px -1px #a0a0a0; text-align: center; }
</style>
